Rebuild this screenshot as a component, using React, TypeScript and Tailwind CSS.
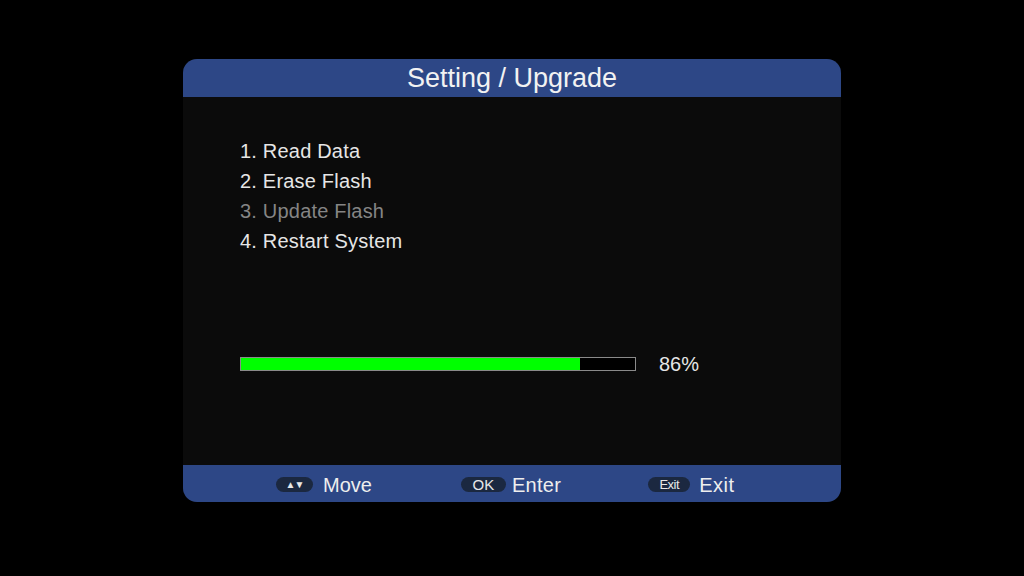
import React from 'react';

const steps = [
  { label: '1. Read Data', done: true },
  { label: '2. Erase Flash', done: true },
  { label: '3. Update Flash', done: false },
  { label: '4. Restart System', done: true },
];

const progress = 86;

const Pill = ({ children, w }: { children: React.ReactNode; w: string }) => (
  <span className={`flex h-[15px] ${w} items-center justify-center rounded-full bg-[#1b2840] text-[#e8e8e8]`}>
    {children}
  </span>
);

export default function App() {
  return (
    <div className="flex h-[576px] w-[1024px] justify-center bg-black pt-[59px] font-['Liberation_Sans',Arial,sans-serif]">
      <div className="flex h-[443px] w-[658px] flex-col overflow-hidden rounded-[14px] bg-[#0b0b0b]">
        <div className="flex h-[38px] items-center justify-center bg-[#2d4786] text-[27px] text-[#f2f2f2]">
          Setting / Upgrade
        </div>

        <div className="flex flex-1 flex-col pl-[57px] pt-[39px]">
          <ul className="flex flex-col">
            {steps.map((s) => (
              <li
                key={s.label}
                className={`h-[30px] text-[20px] leading-[30px] tracking-[0.2px] ${s.done ? 'text-[#e6e6e6]' : 'text-[#858585]'}`}
              >
                {s.label}
              </li>
            ))}
          </ul>

          <div className="mt-[93px] flex items-center">
            <div className="h-[14px] w-[396px] border border-[#8a8a8a] bg-black">
              <div className="h-full bg-[#00ff00]" style={{ width: `${progress}%` }} />
            </div>
            <span className="ml-[23px] text-[20px] text-[#e6e6e6]">{progress}%</span>
          </div>
        </div>

        <div className="flex h-[37px] items-center bg-[#2d4786] pl-[93px] pt-[2px] text-[20px] text-[#eeeeee]">
          <div className="flex items-center">
            <Pill w="w-[37px]">
              <span className="text-[10px] leading-none tracking-[-1px]">▲▼</span>
            </Pill>
            <span className="ml-[10px]">Move</span>
          </div>
          <div className="ml-[89px] flex items-center">
            <Pill w="w-[45px]">
              <span className="text-[15px] leading-none">OK</span>
            </Pill>
            <span className="ml-[6px] tracking-[0.3px]">Enter</span>
          </div>
          <div className="ml-[87px] flex items-center">
            <Pill w="w-[42px]">
              <span className="text-[13px] leading-none tracking-[-0.5px]">Exit</span>
            </Pill>
            <span className="ml-[9px] tracking-[0.5px]">Exit</span>
          </div>
        </div>
      </div>
    </div>
  );
}
